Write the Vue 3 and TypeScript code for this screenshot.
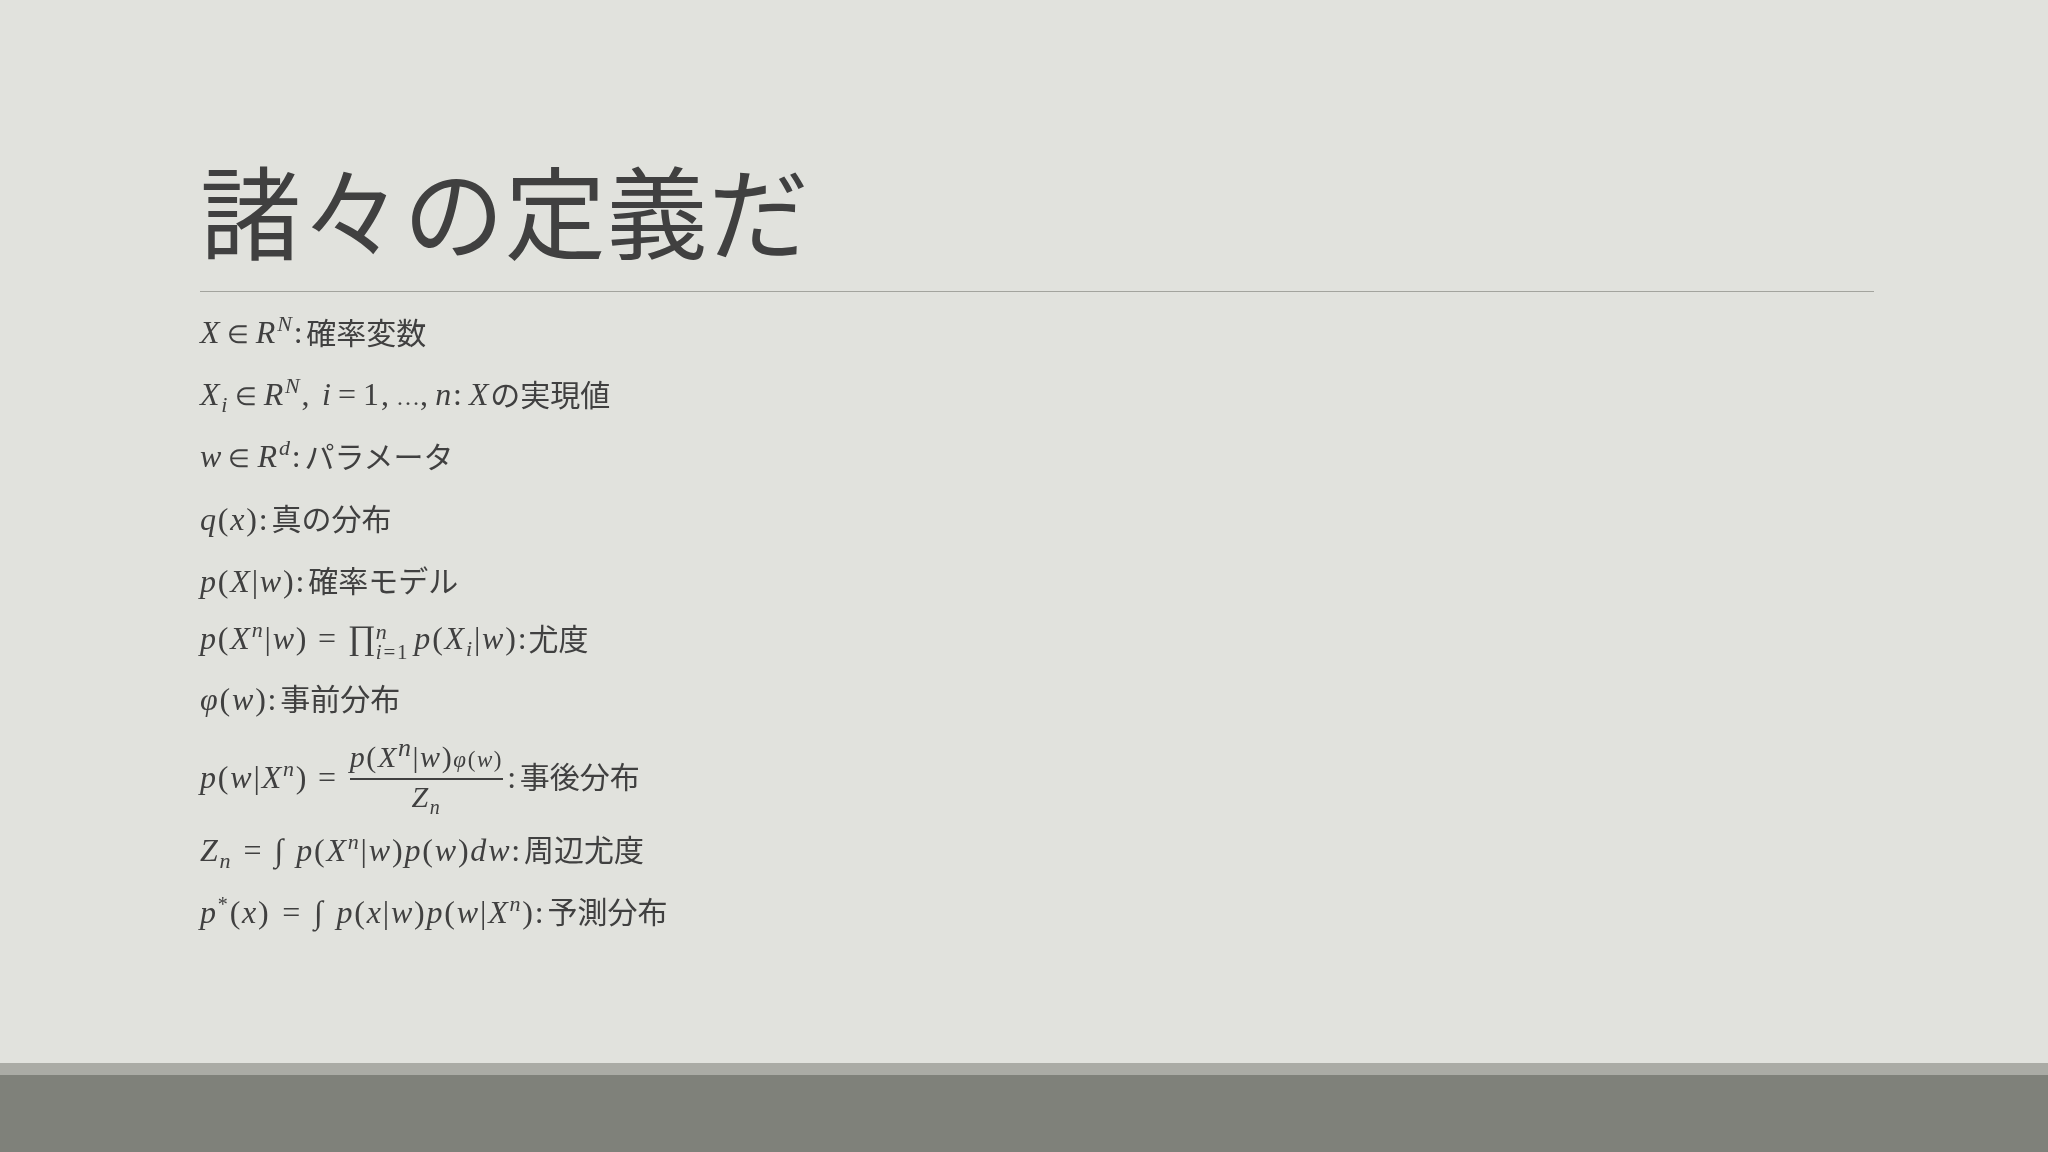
<script setup lang="ts">
const title = "諸々の定義だ";
</script>

<template>
  <div class="slide">
    <main class="content">
      <header class="head"><h1>{{ title }}</h1></header>
      <div class="list">
        <p class="row"><span class="m tsp"><i>X</i> <span class="rel">∈</span> <i>R</i><sup><i>N</i></sup>:</span><span class="j">確率変数</span></p>
        <p class="row"><span class="m tsp"><i>X</i><sub><i>i</i></sub> <span class="rel">∈</span> <i>R</i><sup><i>N</i></sup>,&nbsp; <i>i</i> = 1, <span class="dots">…</span>, <i>n</i>:<i class="after"> X</i></span><span class="j tight">の実現値</span></p>
        <p class="row"><span class="m tsp"><i>w</i> <span class="rel">∈</span> <i>R</i><sup><i>d</i></sup>:</span><span class="j">パラメータ</span></p>
        <p class="row"><span class="m"><i>q</i>(<i>x</i>):</span><span class="j">真の分布</span></p>
        <p class="row"><span class="m"><i>p</i>(<i>X</i>|<i>w</i>):</span><span class="j">確率モデル</span></p>
        <p class="row g14"><span class="m"><i>p</i>(<i>X</i><sup><i>n</i></sup>|<i>w</i>) = <span class="big">∏</span><span class="limits"><i>n</i><small><i>i</i>=1</small></span><i>p</i>(<i>X</i><sub><i>i</i></sub>|<i>w</i>):</span><span class="j tight">尤度</span></p>
        <p class="row g16"><span class="m"><i>φ</i>(<i>w</i>):</span><span class="j">事前分布</span></p>
        <div class="row tall"><span class="m"><i>p</i>(<i>w</i>|<i>X</i><sup><i>n</i></sup>) = </span>
          <span class="frac"><span class="num"><i>p</i>(<i>X</i><sup><i>n</i></sup>|<i>w</i>)<small><i>φ</i>(<i>w</i>)</small></span><span class="den"><i>Z</i><sub><i>n</i></sub></span></span>
          <span class="m colon">:</span><span class="j">事後分布</span></div>
        <p class="row g7"><span class="m wsp"><i>Z</i><sub><i>n</i></sub> = ∫ <i>p</i>(<i>X</i><sup><i>n</i></sup>|<i>w</i>)<i>p</i>(<i>w</i>)<i>dw</i>:</span><span class="j">周辺尤度</span></p>
        <p class="row"><span class="m wsp2"><i>p</i><sup class="star">*</sup>(<i>x</i>) = ∫ <i>p</i>(<i>x</i>|<i>w</i>)<i>p</i>(<i>w</i>|<i>X</i><sup><i>n</i></sup>):</span><span class="j">予測分布</span></p>
      </div>
    </main>
    <footer class="foot"></footer>
  </div>
</template>

<style>
html, body { margin: 0; background: #e1e2dd; }
</style>

<style scoped>
.slide { width: 2048px; height: 1152px; display: flex; flex-direction: column; background: #e1e2dd; color: #404040; overflow: hidden; }
.content { flex: 1; padding: 148px 174px 0 200px; filter: blur(0.4px); }
.head { border-bottom: 1px solid #a3a49e; padding-bottom: 23px; }
h1 { margin: 0; height: 120px; font: 400 101px/120px "Noto Sans CJK JP", sans-serif; letter-spacing: 0.6px; }
.list { display: flex; flex-direction: column; padding-top: 19px; }
.row { margin: 18px 0 0; height: 44px; display: flex; align-items: center; white-space: pre; }
.row:first-child { margin-top: 0; }
.row.g14 { margin-top: 14px; }
.row.g16 { margin-top: 16px; }
.row.g7 { margin-top: 7px; }
.row.tall { height: 88px; margin-top: 12px; }
.m { font: 32px/44px "Liberation Serif", serif; letter-spacing: 1.8px; }
.m i { font-style: italic; }
.tsp { word-spacing: -4.5px; }
.wsp { word-spacing: 1.3px; }
.wsp2 { word-spacing: 2px; }
.rel { font-size: 25px; }
.dots { font-size: 24px; letter-spacing: 0; }
.colon { margin-left: 4px; }
.j { font: 400 30px/44px "Noto Sans CJK JP", sans-serif; margin-left: 2px; padding-bottom: 4px; }
.j.tight { margin-left: 0; }
sup, sub { font-size: 22px; line-height: 0; }
.star { font-size: 20px; }
.big { font-size: 34px; line-height: 0; letter-spacing: 0; }
.limits { display: inline-flex; flex-direction: column; vertical-align: middle; font-size: 22px; line-height: 20px; margin: 0 5px 0 0; }
.limits small { font-size: 21px; }
.frac { display: inline-flex; flex-direction: column; align-items: center; font: 30px/34px "Liberation Serif", serif; letter-spacing: 1.6px; margin-left: 2px; }
.num { border-bottom: 2px solid #404040; padding-bottom: 1px; }
.num sup { font-size: 26px; }
.num small { font-size: 23px; }
.den sub { font-size: 20px; }
.foot { height: 77px; background: #7f817a; border-top: 12px solid #aaaba5; }
</style>
